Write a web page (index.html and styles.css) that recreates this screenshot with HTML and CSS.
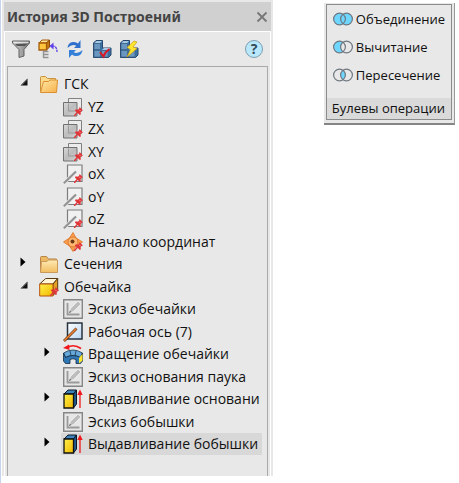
FILE: index.html
```html
<!DOCTYPE html>
<html lang="ru">
<head>
<meta charset="utf-8">
<meta name="viewport" content="width=device-width, initial-scale=1">
<title>История 3D Построений</title>
<link rel="stylesheet" href="styles.css">
</head>
<body>
<svg class="defs" aria-hidden="true">
  <defs>
    <linearGradient id="gold" x1="0" y1="0" x2="1" y2="1"><stop offset="0" stop-color="#ffe9a8"/><stop offset="1" stop-color="#f7b04a"/></linearGradient>
    <linearGradient id="goldDown" x1="0" y1="0" x2="0" y2="1"><stop offset="0" stop-color="#ffeab5"/><stop offset="1" stop-color="#f2bd60"/></linearGradient>
    <linearGradient id="steel" x1="0" y1="0" x2="1" y2="1"><stop offset="0" stop-color="#d9d9d9"/><stop offset=".5" stop-color="#bcbcbc"/><stop offset="1" stop-color="#d2d2d2"/></linearGradient>
    <linearGradient id="yellow" x1="0" y1="0" x2="1" y2="1"><stop offset="0" stop-color="#fff04a"/><stop offset="1" stop-color="#f0b800"/></linearGradient>
    <linearGradient id="funnel" x1="0" y1="0" x2="1" y2="0"><stop offset="0" stop-color="#d5d5d5"/><stop offset="1" stop-color="#777"/></linearGradient>
    <linearGradient id="pane" x1="0" y1="0" x2="1" y2="1"><stop offset="0" stop-color="#fff"/><stop offset="1" stop-color="#b9d6f2"/></linearGradient>
    <symbol id="pin" viewBox="0 0 8 8"><path d="M5 0l3 3-1.400 .5-.8 1.500 .4 1.500-1 .6-1.900-1.700L1 8H0V7l2.300-2.300L.8 3l.7-1 1.500 .4 1.500-.9z" fill="#e0363a"/><path d="M4.500 2.300l1.300 1.300" stroke="#ff9a90" stroke-width=".8"/></symbol>
    <symbol id="open" viewBox="0 0 8 8"><path d="M7.500 0.500v7H.5z" fill="#111"/><path d="M6.800 2L2 7" stroke="#666" stroke-width=".8"/></symbol>
    <symbol id="closed" viewBox="0 0 8 12"><path d="M.5 1.500L5.500 6l-5 4.500z" fill="#000"/></symbol>
    <symbol id="folder-open" viewBox="0 0 20 20"><path d="M1.500 18V3.500q0-1 1-1h4l2 2h8V9" fill="#fbd98d" stroke="#c9923f"/><path d="M4.500 7.500h5l1.500-1.500h7.500l-1 12.500h-16z" fill="url(#gold)" stroke="#dc9131"/></symbol>
    <symbol id="folder" viewBox="0 0 20 20"><path d="M1.500 18V3.500q0-1 1-1h5l2 2.500h8V18z" fill="#eeb965" stroke="#b88445"/><path d="M2.500 7.500h5.500L9.500 6h9v12.500h-17z" fill="url(#goldDown)" stroke="#c9995a"/></symbol>
    <symbol id="plane" viewBox="0 0 20 20"><path d="M5.500 1.500h13v13h-13z" fill="#ececec" stroke="#808080"/><path d="M.5 5.500h13.500v13.500H.5z" fill="url(#steel)" stroke="#707070"/><path d="M5.500 6.500V14h8" fill="none" stroke="#8f8f8f" stroke-width=".8"/><use href="#pin" x="11" y="10" width="9" height="9"/></symbol>
    <symbol id="axis" viewBox="0 0 20 20"><path d="M4.500 1h14.500v16.500H4.500z" fill="#f1f1f1" stroke="#7d7d7d" stroke-width="1.200"/><path d="M.8 19.200L13 7.500" stroke="#e8e8e8" stroke-width="3.600"/><path d="M.8 19.200L13 7.500" stroke="#929292" stroke-width="2"/><use href="#pin" x="11" y="10" width="9" height="9"/></symbol>
    <symbol id="origin" viewBox="0 0 20 20"><path d="M10 0.500l3 5.500 6.500 4-6.500 4-3 5.500L6.500 14 .5 10l6-4z" fill="#ffa04b" stroke="#e08038"/><circle cx="10" cy="10" r="5" fill="#ffb670" stroke="#dc7830"/><circle cx="9.500" cy="9.500" r="2" fill="#6b3815"/><use href="#pin" x="11" y="10" width="9" height="9"/></symbol>
    <symbol id="body" viewBox="0 0 20 20"><path d="M.7 7l6-5.500h12L14 7z" fill="#fff6d8" stroke="#5a3a12"/><path d="M14 7l4.700-5.500v12L14 18.500z" fill="#e2a028" stroke="#5a3a12"/><path d="M.7 7H14v12H.7z" fill="url(#yellow)" stroke="#b8500e"/><use href="#pin" x="11" y="10" width="9" height="9"/></symbol>
    <symbol id="sketch" viewBox="0 0 20 20"><path d="M.7 .7h18.600v18.600H.7z" fill="#e6e6e6" stroke="#868686" stroke-width="1.400"/><path d="M4.500 4v11.500h12" fill="none" stroke="#9a9a9a" stroke-width="1.800"/><path d="M6 14l1.500-4.500L15 2l3 3-7.500 7.500z" fill="#bdbdbd" stroke="#f8f8f8" stroke-width=".7"/><path d="M5.500 14.500l1.500-3 1.500 1.500z" fill="#777"/></symbol>
    <symbol id="workaxis" viewBox="0 0 20 20"><path d="M4.500 1h14.500v16H4.500z" fill="url(#pane)" stroke="#27323e" stroke-width="1.500"/><path d="M1 19L13.500 6.500" stroke="#5d2b0a" stroke-width="2.600"/><path d="M1.200 18.700L13.300 6.600" stroke="#ec8436" stroke-width="1.500"/></symbol>
    <symbol id="revolve" viewBox="0 0 20 20"><path d="M4 3.500Q11-.5 18 4.500" fill="none" stroke="#f2171c" stroke-width="1.600"/><path d="M0 4L6 .5 6.500 6z" fill="#f2171c"/><path d="M.5 9Q10 3 19.500 9L17.500 13.500Q10 9.500 2.500 13.500z" fill="#67a8da" stroke="#17324c" stroke-width=".8"/><path d="M.5 9l2 4.500Q10 9.500 17.500 13.500l2-4.500v8l-2 2.500H13v-4q-3-1.500-6 0v4H2.500l-2-2.500z" fill="#2f76b4" stroke="#142c42" stroke-width=".8"/><path d="M7 7l1 4.500m5-4.500l-1 4.500" stroke="#17324c" stroke-width=".8"/><path d="M16 14l3.500-4v6.500L16 19.500z" fill="#ffe52f"/></symbol>
    <symbol id="extrude" viewBox="0 0 20 20"><path d="M1 5l4-4h8.500l-3 4z" fill="#3f83bd" stroke="#0b1826"/><path d="M10.500 5l3-4v14l-3 4z" fill="#205a8d" stroke="#0b1826"/><path d="M1 5h9.500v14H1z" fill="url(#yellow)" stroke="#111" stroke-width="1.300"/><path d="M17 19V5" stroke="#f0191c" stroke-width="1.300"/><path d="M14.300 6L17 .5 19.700 6z" fill="#f0191c"/></symbol>
    <symbol id="blocks" viewBox="0 0 20 20"><path d="M1.500 4L4 1.500h6.500V9L19 9v7l-2.500 2.500h-15z" fill="#3a72a8" stroke="#26486c"/><path d="M2 4.500h6.500v6H2zM2 11.500h6.500v6.500H2zM9.500 11.500H16V18H9.500z" fill="#6a97bf" stroke="#3a6088" stroke-width=".7"/><path d="M2.500 4L4.500 2h5.500l-2 2zM10 11l2-2h6.500l-2 2z" fill="#a8c9e3"/></symbol>
    <symbol id="rings" viewBox="0 0 20 14"><circle cx="6.500" cy="7" r="5.900"/><circle cx="13.500" cy="7" r="5.900"/></symbol>
  </defs>
</svg>

<main class="workspace">
  <section class="history">
    <header class="title">
      <h1>История 3D Построений</h1>
      <button class="close" type="button" aria-label="Закрыть"><svg viewBox="0 0 12 12"><path d="M1.500 1.500l9 9m0-9l-9 9" stroke="#777" stroke-width="1.800"/></svg></button>
    </header>
    <div class="inner">
      <div class="toolbar">
        <button type="button" aria-label="Фильтр"><svg viewBox="0 0 20 20"><path d="M1.500 2h17v2L13 10.500V17l-5 1.500v-8L1.500 4z" fill="url(#funnel)" stroke="#606060"/><path d="M2.500 3.300h15" stroke="#eee"/><path d="M4 5h12l-2 2H6z" fill="#555"/></svg></button>
        <button type="button" aria-label="Откат"><svg viewBox="0 0 20 20"><path d="M1 4l3-3h7.500l-3 3z" fill="#ffe49a" stroke="#a65a08"/><path d="M8.500 4l3-3v7l-3 3z" fill="#c57910" stroke="#8b4808"/><path d="M1 4h7.500v7H1z" fill="#ffc53c" stroke="#a65a08" stroke-width="1.300"/><path d="M5.500 12v7M5 12.500h5.500M5 15.500h5.500M5 18.500h5.500" stroke="#929292" stroke-width="1.400"/><path d="M13.500 7q5.500-.5 5.500 6" fill="none" stroke="#6041ea" stroke-width="1.300" stroke-dasharray="3 .6"/><path d="M11.500 7l4-3.500v7z" fill="#6041ea"/></svg></button>
        <button type="button" aria-label="Обновить"><svg viewBox="0 0 20 20"><path d="M2.500 9Q3 3.500 8 3q3-.5 5 1.500L15.500 1v8H9l2.300-2.300Q7 4.500 2.500 9z" fill="#2f70cc"/><path d="M17.500 11Q17 16.500 12 17q-3 .5-5-1.500L4 19v-8h7l-2.300 2.300Q13 15.500 17.500 11z" fill="#347fd8"/></svg></button>
        <button type="button" aria-label="Проверить модель"><svg viewBox="0 0 20 20"><use href="#blocks"/><path d="M8 13l3.500 4.500Q13 13 17.500 10" fill="none" stroke="#dc1725" stroke-width="2"/></svg></button>
        <button type="button" aria-label="Перестроить"><svg viewBox="0 0 20 20"><use href="#blocks"/><path d="M15 2L8 8.500l3.500 2L8 18l10-8.500L14 8l4-5z" fill="#ffe62e" stroke="#c59b12" stroke-width=".7"/></svg></button>
        <button class="help" type="button" aria-label="Справка">?</button>
      </div>
      <ul class="tree" role="tree">
        <li class="node" role="treeitem" aria-expanded="true"><svg class="arrow open"><use href="#open"/></svg><span class="entry"><svg><use href="#folder-open"/></svg><span>ГСК</span></span></li>
        <li class="node child" role="treeitem"><span class="entry"><svg><use href="#plane"/></svg><span>YZ</span></span></li>
        <li class="node child" role="treeitem"><span class="entry"><svg><use href="#plane"/></svg><span>ZX</span></span></li>
        <li class="node child" role="treeitem"><span class="entry"><svg><use href="#plane"/></svg><span>XY</span></span></li>
        <li class="node child" role="treeitem"><span class="entry"><svg><use href="#axis"/></svg><span>oX</span></span></li>
        <li class="node child" role="treeitem"><span class="entry"><svg><use href="#axis"/></svg><span>oY</span></span></li>
        <li class="node child" role="treeitem"><span class="entry"><svg><use href="#axis"/></svg><span>oZ</span></span></li>
        <li class="node child" role="treeitem"><span class="entry"><svg><use href="#origin"/></svg><span>Начало координат</span></span></li>
        <li class="node" role="treeitem" aria-expanded="false"><svg class="arrow"><use href="#closed"/></svg><span class="entry"><svg><use href="#folder"/></svg><span>Сечения</span></span></li>
        <li class="node" role="treeitem" aria-expanded="true"><svg class="arrow open"><use href="#open"/></svg><span class="entry"><svg><use href="#body"/></svg><span>Обечайка</span></span></li>
        <li class="node child" role="treeitem"><span class="entry"><svg><use href="#sketch"/></svg><span>Эскиз обечайки</span></span></li>
        <li class="node child" role="treeitem"><span class="entry"><svg><use href="#workaxis"/></svg><span>Рабочая ось (7)</span></span></li>
        <li class="node child" role="treeitem" aria-expanded="false"><svg class="arrow"><use href="#closed"/></svg><span class="entry"><svg><use href="#revolve"/></svg><span>Вращение обечайки</span></span></li>
        <li class="node child" role="treeitem"><span class="entry"><svg><use href="#sketch"/></svg><span>Эскиз основания паука</span></span></li>
        <li class="node child" role="treeitem" aria-expanded="false"><svg class="arrow"><use href="#closed"/></svg><span class="entry"><svg><use href="#extrude"/></svg><span>Выдавливание основани</span></span></li>
        <li class="node child" role="treeitem"><span class="entry"><svg><use href="#sketch"/></svg><span>Эскиз бобышки</span></span></li>
        <li class="node child" role="treeitem" aria-expanded="false" aria-selected="true"><svg class="arrow"><use href="#closed"/></svg><span class="entry"><svg><use href="#extrude"/></svg><span>Выдавливание бобышки</span></span></li>
      </ul>
    </div>
  </section>

  <section class="ribbon">
    <div class="group">
      <div class="commands">
        <button type="button"><svg viewBox="0 0 20 14"><use class="filled" href="#rings"/><use class="outline" href="#rings"/></svg>Объединение</button>
        <button type="button"><svg viewBox="0 0 20 14"><circle cx="6.500" cy="7" r="5.900" fill="#6fd6ff"/><circle cx="13.500" cy="7" r="5.900" fill="#e8e8e8"/><use class="outline" href="#rings"/></svg>Вычитание</button>
        <button type="button"><svg viewBox="0 0 20 14"><path d="M10 2.300a5.900 5.900 0 0 1 0 9.400 5.900 5.900 0 0 1 0-9.400z" fill="#6fd6ff"/><use class="outline" href="#rings"/></svg>Пересечение</button>
      </div>
      <h2>Булевы операции</h2>
    </div>
  </section>
</main>
</body>
</html>
```
FILE: styles.css
```css
* { box-sizing: border-box; }

body {
  margin: 0;
  background: #fff;
  color: #111;
  font: 14px/20px "Open Sans", "Noto Sans", sans-serif;
}

h1, h2, ul { margin: 0; padding: 0; font-size: inherit; font-weight: inherit; }

button {
  border: 0;
  padding: 0;
  background: none;
  color: inherit;
  font: inherit;
}

svg { display: block; flex: none; }

.defs { position: absolute; width: 0; height: 0; }

.workspace {
  display: flex;
  align-items: flex-start;
  justify-content: space-between;
  min-height: 100vh;
  padding-right: 4px;
  border-left: 1px solid #c6d3ea;
}

.history {
  flex: 0 1 271px;
  min-width: 0;
  margin-left: 1px;
  padding: 2px 2px 0;
  background: #e8e8e8;
}

.title {
  display: flex;
  align-items: center;
  justify-content: space-between;
  height: 29px;
  padding: 0 3px;
  background: #d0d0d0;
}

.title h1 {
  color: #444;
  font-family: "Noto Sans", sans-serif;
  font-size: 14px;
  font-weight: 700;
  white-space: nowrap;
}

.close svg { width: 12px; height: 12px; }

.inner {
  padding: 0 2px;
  border: 1px solid #fff;
  border-bottom: 0;
}

.toolbar {
  display: flex;
  align-items: center;
  gap: 7px;
  height: 34px;
  padding: 0 5px 0 4px;
}

.toolbar svg { width: 20px; height: 20px; }

.help {
  width: 18px;
  height: 18px;
  margin-left: auto;
  border: 1px solid #7d9fb0;
  border-radius: 50%;
  background: #b9e7fb;
  color: #334a58;
  font-size: 14px;
  font-weight: 700;
  line-height: 16px;
}

.tree {
  padding: 6px 5px 21px 0;
  border: 1px solid #a9a9a9;
  border-bottom: 0;
  list-style: none;
}

.node {
  display: flex;
  align-items: center;
  height: 22px;
  padding-left: 29px;
  position: relative;
}

.node:nth-child(even) { height: 23px; }

.node.child { padding-left: 53px; }

.arrow {
  position: absolute;
  left: 12px;
  width: 8px;
  height: 12px;
  margin-bottom: 4px;
}

.arrow.open { height: 8px; }

.child .arrow { left: 36px; }

.entry {
  display: flex;
  flex: 1;
  align-items: center;
  gap: 5px;
  min-width: 0;
  height: 100%;
  padding-left: 2px;
  white-space: nowrap;
  overflow: hidden;
}

.entry svg { width: 20px; height: 20px; }

[aria-selected="true"] .entry { background: #d8d8d8; }

.ribbon {
  flex: 0 1 131px;
  margin-top: 3px;
  padding: 1px 2px 3px;
  border-right: 1px solid #999;
  border-bottom: 2px solid #858585;
  background: #e8e8e8;
  font-size: 13px;
}

.group { border: 1px solid #8c8c8c; }

.commands { padding: 0 6px 9px; }

.commands button {
  display: flex;
  align-items: center;
  gap: 3px;
  height: 28px;
  white-space: nowrap;
}

.commands svg { width: 20px; height: 14px; }

.filled { fill: #6fd6ff; }

.outline { fill: none; stroke: #6f7780; stroke-width: 1.2px; }

.group h2 {
  height: 21px;
  padding-left: 5px;
  background: #dadada;
  white-space: nowrap;
}
```
